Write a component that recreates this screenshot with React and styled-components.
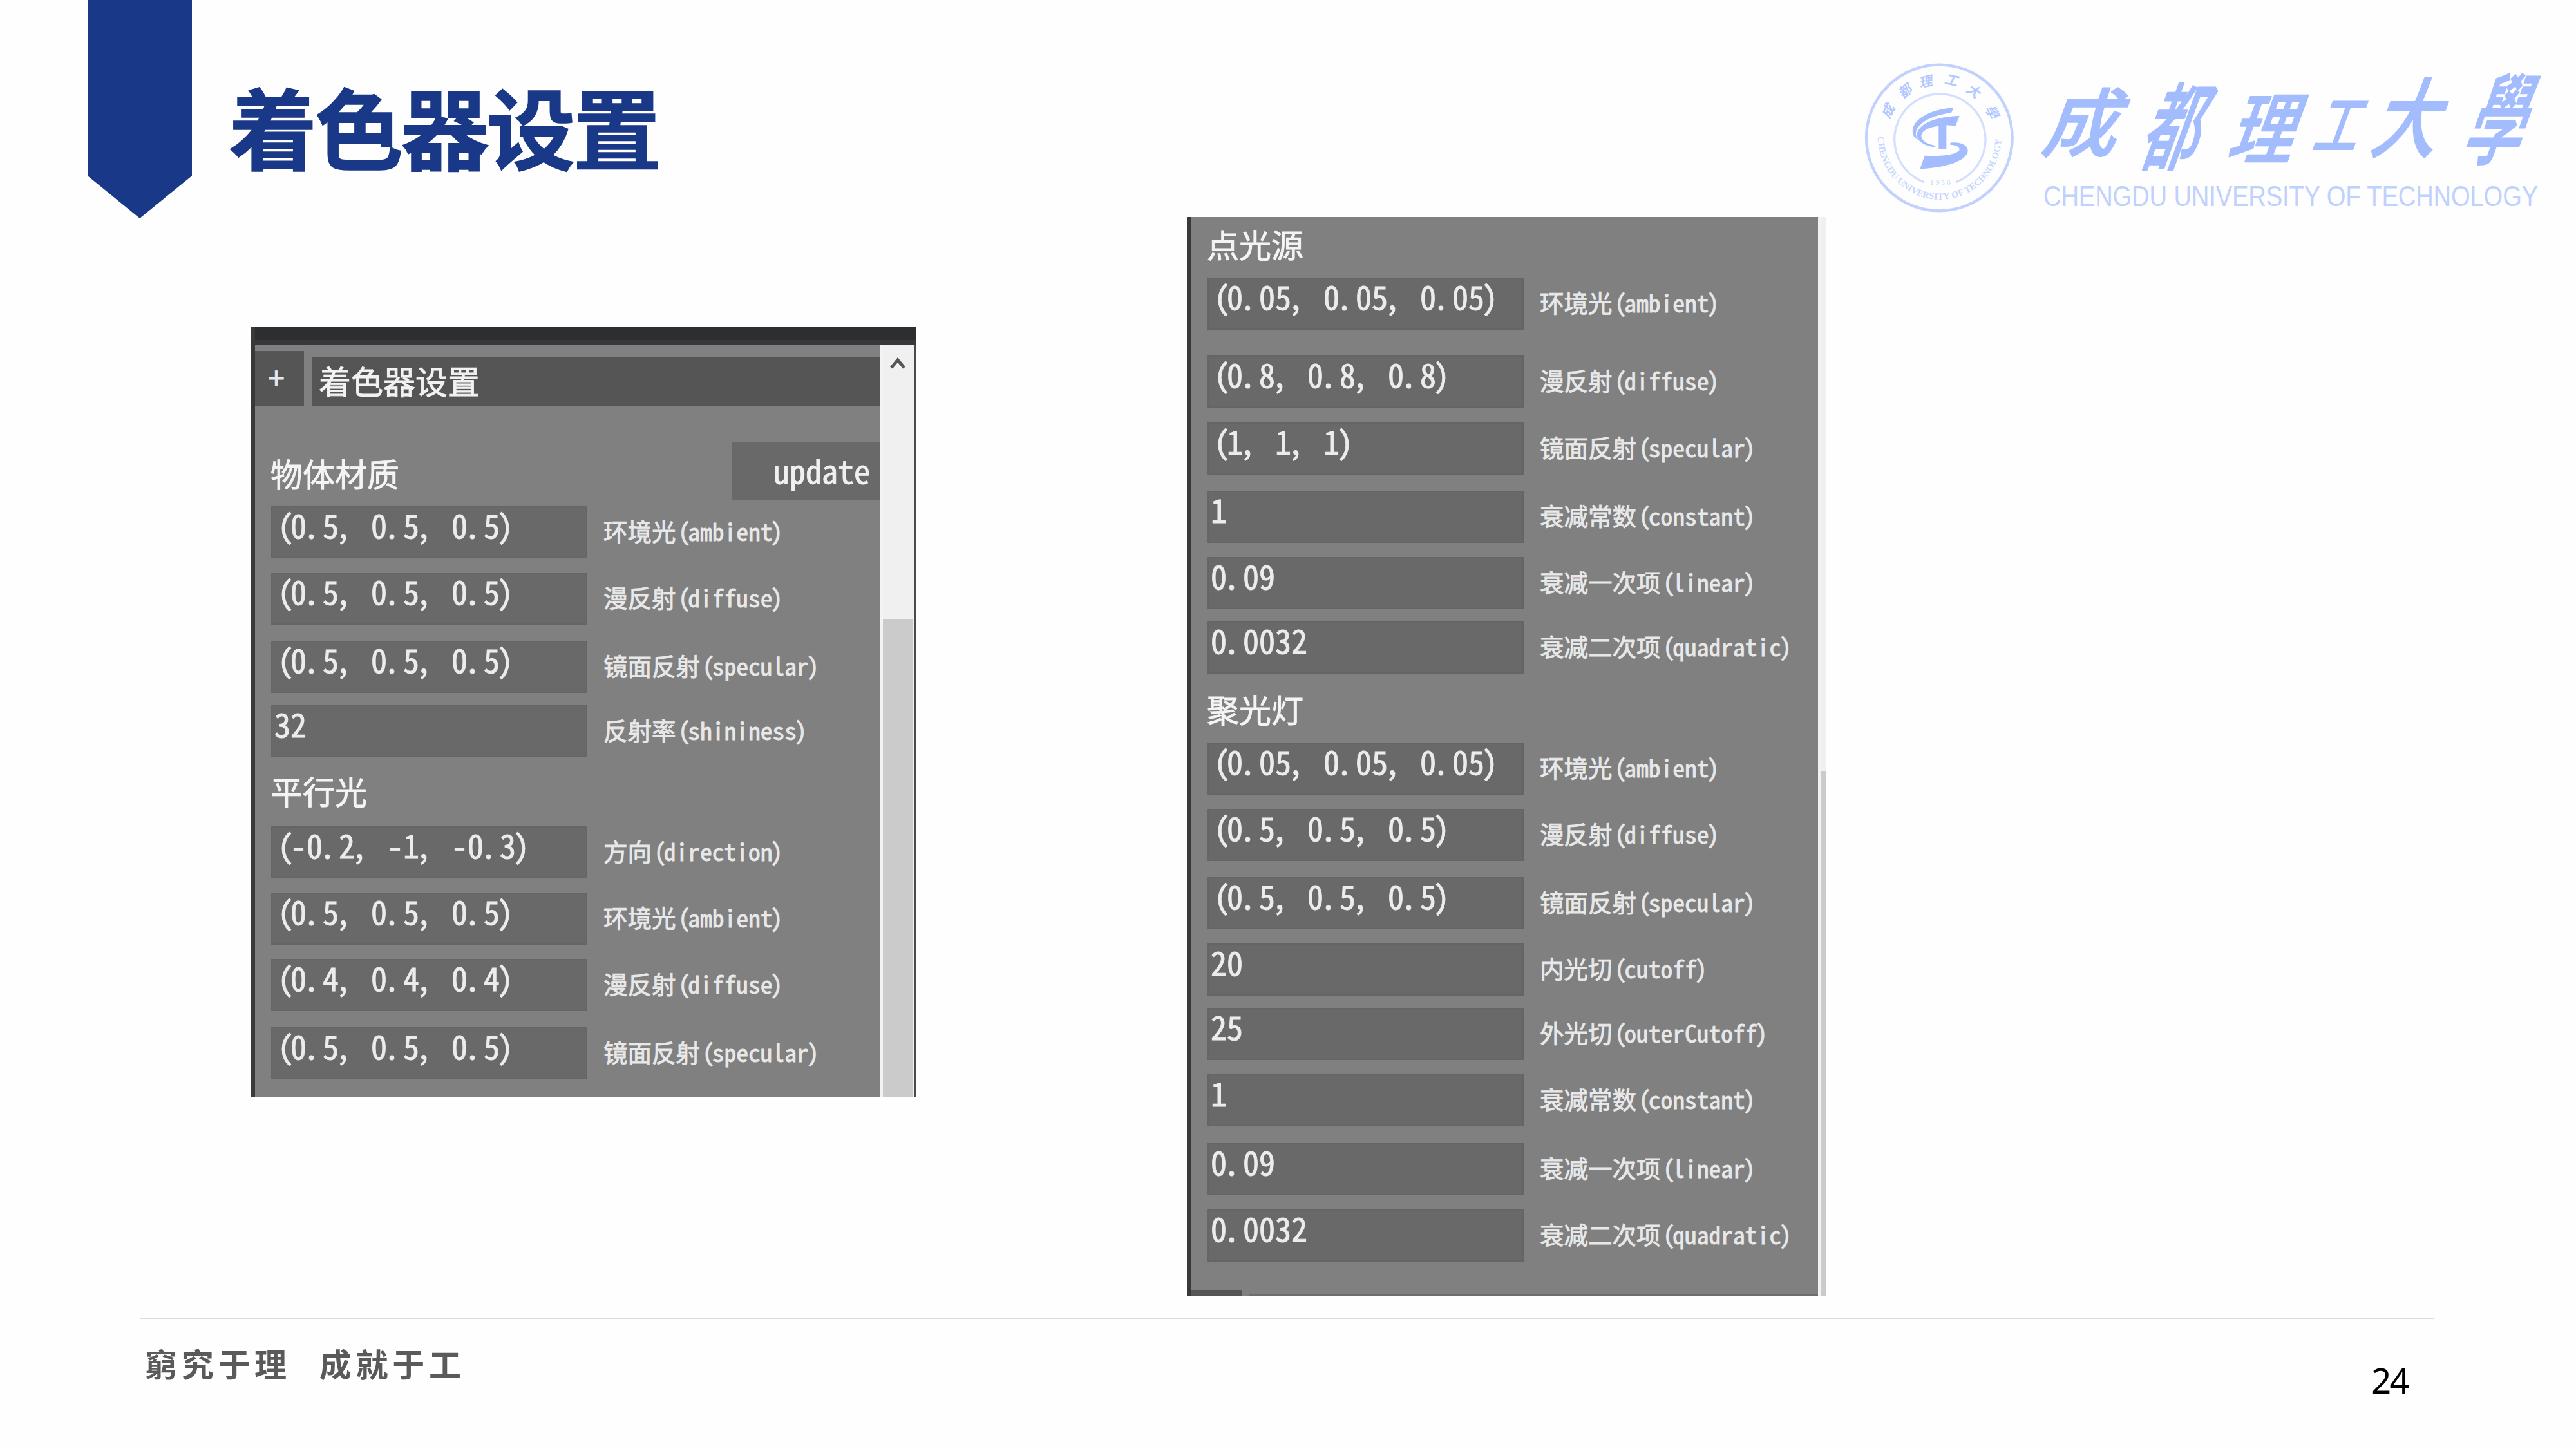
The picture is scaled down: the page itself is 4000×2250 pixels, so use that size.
import React from "react";
import styled, { createGlobalStyle } from "styled-components";

const Global = createGlobalStyle`
  html, body { margin: 0; padding: 0; background: #fff; }
  * { box-sizing: border-box; }
`;

const cjk = `"Noto Sans CJK SC", "Noto Sans", sans-serif`;

const Slide = styled.main`
  width: 4000px;
  height: 2250px;
  background: #fefefe;
  overflow: hidden;
  display: grid;
  grid-template-columns: 100%;
  grid-template-rows: 337px 1710px 203px;
  font-family: ${cjk};
`;

const Header = styled.header`
  display: flex;
  align-items: flex-start;
  height: 340px;
  padding-left: 136px;
`;

const Ribbon = styled.div`
  width: 162px;
  height: 339px;
  background: #1a3888;
  clip-path: polygon(0 0, 100% 0, 100% 273px, 50% 100%, 0 273px);
`;

const Title = styled.h1`
  margin: 94px 0 0 57px;
  width: 703px;
  font-size: 137.5px;
  line-height: 200px;
  letter-spacing: -3.8px;
  font-weight: 700;
  color: #1a3888;
  -webkit-text-stroke: 1.5px #1a3888;
  white-space: nowrap;
`;

const Emblem = styled.svg`
  width: 270px;
  height: 260px;
  margin: 80px 0 0 1822px;
`;

const Wordmark = styled.svg`
  width: 850px;
  height: 260px;
  margin-top: 80px;
  overflow: visible;
`;

const Body = styled.section`
  display: flex;
  align-items: flex-start;
`;

const Shot = styled.div`
  width: ${(p) => p.$width}px;
  height: ${(p) => p.$height}px;
  margin: ${(p) => p.$margin};
  display: flex;
  flex-direction: column;
  overflow: hidden;
  background: #808080;
  border-left: ${(p) => p.$edge}px solid #39393b;
  -webkit-text-stroke: 0.9px currentColor;
`;

const TopBand = styled.div`
  height: 28px;
  flex: none;
  margin-left: -6px;
  background: #2d2e30;
  border-bottom: 8px solid #38383a;
`;

const ShotBody = styled.div`
  flex: 1;
  display: flex;
  min-height: 0;
`;

const Content = styled.div`
  flex: 1;
  min-width: 0;
  display: flex;
  flex-direction: column;
`;

const Track = styled.div`
  width: ${(p) => p.$width}px;
  flex: none;
  display: flex;
  flex-direction: column;
  background: #f0f0f0;
  border-left: 4px solid #f3f3f3;
  border-right: ${(p) => (p.$framed ? "3px solid #4a4a4c" : "none")};
`;

const Arrow = styled.svg`
  width: 24px;
  height: 20px;
  margin: 18px 0 0 11px;
`;

const Thumb = styled.div`
  flex: 1;
  margin-top: ${(p) => p.$top}px;
  margin-right: ${(p) => p.$inset}px;
  background: #cbcbcb;
`;

const GroupBar = styled.div`
  height: 85px;
  margin-top: 9px;
  display: flex;
  align-items: flex-end;
  gap: 13px;
`;

const Toggle = styled.div`
  width: 76px;
  height: 85px;
  padding-right: 10px;
  background: #555;
  color: #e8e8e8;
  font-size: 46px;
  line-height: 78px;
  text-align: center;
`;

const GroupName = styled.div`
  flex: 1;
  height: 75px;
  padding-left: 10px;
  background: #555;
  color: #f2f2f2;
  font-size: 50px;
  line-height: 71px;
`;

const SectionHead = styled.div`
  display: flex;
  justify-content: space-between;
  height: 90px;
  margin-top: 56px;
`;

const SectionName = styled.div`
  height: 60px;
  flex: none;
  margin-top: ${(p) => p.$top}px;
  padding-left: 24px;
  color: #f4f4f4;
  font-size: 50px;
  line-height: 59px;
`;

const Button = styled.div`
  width: 231px;
  height: 90px;
  padding-right: 16px;
  background: #696969;
  color: #f0f0f0;
  font-size: 50px;
  line-height: 86px;
  text-align: right;
  font-feature-settings: "hwid";
`;

const Row = styled.div`
  display: flex;
  flex: none;
  height: 81px;
  margin-top: ${(p) => p.$gap}px;
  padding-left: 25px;
`;

const Field = styled.div`
  width: 491px;
  padding-left: 5px;
  background: #696969;
  box-shadow: inset 0 0 0 2px #656565;
  color: #ececec;
  font-size: 50px;
  line-height: 57px;
  white-space: pre;
  font-feature-settings: "hwid", "liga" 0;
`;

const Nudge = styled.span`
  margin-left: ${(p) => p.$by}em;
  margin-right: ${(p) => -p.$by}em;
`;

const Label = styled.div`
  padding-left: 25px;
  color: #e8e8e8;
  font-size: 37.5px;
  line-height: 75px;
  white-space: pre;
  font-feature-settings: "hwid", "liga" 0, "dlig" 0, "calt" 0;
  font-variant-ligatures: none;
`;

const NextGroup = styled.div`
  display: flex;
  align-items: flex-end;
  gap: 12px;
  height: 10px;
  margin-top: 44px;
`;

const NextToggle = styled.div`
  width: 78px;
  height: 10px;
  background: #555;
`;

const NextBar = styled.div`
  flex: 1;
  height: 3px;
  background: #6e6e6e;
`;

const Footer = styled.footer`
  width: 3562px;
  margin-left: 218px;
  border-top: 1px solid #dcdcdc;
  display: flex;
  justify-content: space-between;
  align-items: flex-start;
`;

const Motto = styled.div`
  display: flex;
  gap: 44px;
  margin: 32px 0 0 7px;
  color: #5a5a5a;
  font-size: 50px;
  font-weight: 700;
  line-height: 72px;
  letter-spacing: 6.7px;
`;

const PageNumber = styled.div`
  margin: 57px 41px 0 0;
  color: #000;
  font-family: "Noto Sans", sans-serif;
  font-size: 54px;
  line-height: 76px;
  letter-spacing: -2.5px;
`;

const shifts = { "(": 0.1, ")": -0.08, ".": -0.1, ",": -0.11 };

const punctuate = (text) =>
  text
    .split(/([.,()])/)
    .filter(Boolean)
    .map((part, i) =>
      part in shifts ? (
        <Nudge key={i} $by={shifts[part]}>
          {part}
        </Nudge>
      ) : (
        part
      )
    );

const materialRows = [
  [10, "(0.5, 0.5, 0.5)", "环境光(ambient)"],
  [22, "(0.5, 0.5, 0.5)", "漫反射(diffuse)"],
  [25, "(0.5, 0.5, 0.5)", "镜面反射(specular)"],
  [19, "32", "反射率(shininess)"],
];
const directionalRows = [
  [25, "(-0.2, -1, -0.3)", "方向(direction)"],
  [22, "(0.5, 0.5, 0.5)", "环境光(ambient)"],
  [22, "(0.4, 0.4, 0.4)", "漫反射(diffuse)"],
  [25, "(0.5, 0.5, 0.5)", "镜面反射(specular)"],
];
const pointRows = [
  [22, "(0.05, 0.05, 0.05)", "环境光(ambient)"],
  [40, "(0.8, 0.8, 0.8)", "漫反射(diffuse)"],
  [23, "(1, 1, 1)", "镜面反射(specular)"],
  [25, "1", "衰减常数(constant)"],
  [22, "0.09", "衰减一次项(linear)"],
  [19, "0.0032", "衰减二次项(quadratic)"],
];
const spotRows = [
  [22, "(0.05, 0.05, 0.05)", "环境光(ambient)"],
  [22, "(0.5, 0.5, 0.5)", "漫反射(diffuse)"],
  [25, "(0.5, 0.5, 0.5)", "镜面反射(specular)"],
  [22, "20", "内光切(cutoff)"],
  [19, "25", "外光切(outerCutoff)"],
  [22, "1", "衰减常数(constant)"],
  [26, "0.09", "衰减一次项(linear)"],
  [22, "0.0032", "衰减二次项(quadratic)"],
];

const Rows = ({ rows }) =>
  rows.map(([gap, value, label], i) => (
    <Row key={i} $gap={gap}>
      <Field>{punctuate(value)}</Field>
      <Label>{punctuate(label)}</Label>
    </Row>
  ));

const ringChars = [
  ["成", 158, 275, -62],
  ["都", 238, 182, -38],
  ["理", 335, 140, -12],
  ["工", 455, 134, 12],
  ["大", 557, 187, 36],
  ["學", 641, 285, 64],
];

const UniversityEmblem = () => (
  <Emblem viewBox="0 0 810 780" fontFamily={cjk}>
    <circle cx="394" cy="402" r="340" fill="none" stroke="#c2d2fc" strokeWidth="13" />
    <path d="M322 608 A212 212 0 1 1 472 608" fill="none" stroke="#d3dffd" strokeWidth="10" />
    {ringChars.map(([c, x, y, a]) => (
      <text
        key={c}
        transform={`translate(${x} ${y}) rotate(${a}) skewX(-12)`}
        y="22"
        textAnchor="middle"
        fontSize="62"
        fontWeight="700"
        fill="#b3c8fe"
      >
        {c}
      </text>
    ))}
    <g fill="#a3bcfe">
      <path d="M460 262 L450 286 C380 294 302 322 286 372 C283 388 287 400 296 412 C274 402 267 382 270 362 C282 306 366 268 460 262Z" />
      <path d="M488 300 L470 346 L427 343 V455 H391 V347 C350 352 310 366 310 396 C314 420 345 433 377 439 L375 446 C328 440 288 420 290 384 C298 336 380 302 488 300Z" />
      <path d="M445 425 C492 418 528 436 527 465 C520 510 420 542 304 547 L326 485 C400 490 472 482 487 460 C492 444 470 435 445 434Z" />
    </g>
    <text x="403" y="622" textAnchor="middle" fontSize="34" letterSpacing="9" fontFamily="Liberation Serif, serif" fill="#c6d6fc">
      1956
    </text>
    <path id="ring" d="M108 396 A287 293 0 0 0 683 396" fill="none" />
    <text fontFamily="Liberation Serif, serif" fontSize="43" fontWeight="700" fill="#c6d6fc" textLength="900">
      <textPath href="#ring" textLength="900">CHENGDU UNIVERSITY OF TECHNOLOGY</textPath>
    </text>
  </Emblem>
);

// [character, centre x, centre y, width scale, height scale]
const brushChars = [
  ["成", 92, 110, 0.98, 0.98],
  ["都", 233, 116, 0.74, 1.25],
  ["理", 373, 119, 0.86, 1.03],
  ["工", 487, 113, 0.58, 0.85],
  ["大", 598, 103, 0.86, 1.14],
  ["學", 737, 104, 0.76, 1.3],
];

const UniversityName = () => (
  <Wordmark viewBox="0 0 850 260">
    {brushChars.map(([c, x, y, sx, sy]) => (
      <text
        key={c}
        transform={`translate(${x} ${y}) skewX(-20) scale(${sx} ${sy})`}
        y="45"
        textAnchor="middle"
        fontFamily={cjk}
        fontSize="118"
        fontWeight="500"
        fill="#a3bcfe"
        stroke="#a3bcfe"
        strokeWidth="2"
        strokeLinejoin="round"
      >
        {c}
      </text>
    ))}
    <text
      transform="translate(23 240) scale(0.868 1)"
      fontFamily="Liberation Sans, Arial, sans-serif"
      fontSize="44"
      fill="#c0d1fd"
      textLength="885"
      lengthAdjust="spacing"
    >
      CHENGDU UNIVERSITY OF TECHNOLOGY
    </text>
  </Wordmark>
);

export default function App() {
  return (
    <Slide>
      <Global />
      <Header>
        <Ribbon />
        <Title>着色器设置</Title>
        <UniversityEmblem />
        <UniversityName />
      </Header>
      <Body>
        <Shot $width={1033} $height={1195} $edge={6} $margin="171px 0 0 390px">
          <TopBand />
          <ShotBody>
            <Content>
              <GroupBar>
                <Toggle>+</Toggle>
                <GroupName>着色器设置</GroupName>
              </GroupBar>
              <SectionHead>
                <SectionName $top={19}>物体材质</SectionName>
                <Button>update</Button>
              </SectionHead>
              <Rows rows={materialRows} />
              <SectionName $top={22}>平行光</SectionName>
              <Rows rows={directionalRows} />
            </Content>
            <Track $width={56} $framed>
              <Arrow viewBox="0 0 24 20">
                <path d="M2 17 L12 5 L22 17" fill="none" stroke="#555" strokeWidth="5" />
              </Arrow>
              <Thumb $top={387} $inset={2} />
            </Track>
          </ShotBody>
        </Shot>
        <Shot $width={993} $height={1676} $edge={7} $margin="0 0 0 420px">
          <ShotBody>
            <Content>
              <SectionName $top={12}>点光源</SectionName>
              <Rows rows={pointRows} />
              <SectionName $top={25}>聚光灯</SectionName>
              <Rows rows={spotRows} />
              <NextGroup>
                <NextToggle />
                <NextBar />
              </NextGroup>
            </Content>
            <Track $width={13}>
              <Thumb $top={860} $inset={0} />
            </Track>
          </ShotBody>
        </Shot>
      </Body>
      <Footer>
        <Motto>
          <span>窮究于理</span>
          <span>成就于工</span>
        </Motto>
        <PageNumber>24</PageNumber>
      </Footer>
    </Slide>
  );
}
